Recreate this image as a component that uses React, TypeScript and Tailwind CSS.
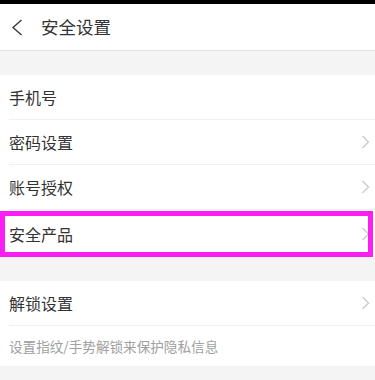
import React from 'react';

const font = { fontFamily: '"Noto Sans CJK SC", "Noto Sans", sans-serif' };

const Chevron = () => (
    <svg width="9" height="14" viewBox="0 0 9 14" fill="none" className="mr-[5px]">
        <path d="M1.5 1L7.5 7L1.5 13" stroke="#c8c8c8" strokeWidth="1.2" />
    </svg>
);

const Row: React.FC<{ label: string; arrow?: boolean; className?: string; children?: React.ReactNode }> = ({
    label,
    arrow = true,
    className = 'h-[44px]',
    children,
}) => (
    <div className={`relative flex items-center justify-between bg-white pl-[9px] ${className}`}>
        <span className="text-[16px] text-[#333]">{label}</span>
        {arrow && <Chevron />}
        {children}
    </div>
);

const Divider = () => (
    <div className="bg-white pl-[9px]">
        <div className="h-px bg-[#f0f0f0]" />
    </div>
);

export default function App() {
    return (
        <div className="w-[375px] h-[380px] overflow-hidden bg-[#f4f4f4]" style={font}>
            <div className="h-[4px] bg-black" />

            {/* Header */}
            <div className="flex items-center h-[47px] bg-white border-b border-[#e2e2e2]">
                <svg width="12" height="17" viewBox="0 0 12 17" fill="none" className="ml-[11px]">
                    <path d="M10.5 1L2 8.5L10.5 16" stroke="#333" strokeWidth="1.3" />
                </svg>
                <span className="ml-[18px] text-[17.5px] text-[#333]">安全设置</span>
            </div>

            <div className="h-[24px]" />

            <Row label="手机号" arrow={false} />
            <Divider />
            <Row label="密码设置" />
            <Divider />
            <Row label="账号授权" />
            <Divider />
            <Row label="安全产品" className="h-[47px]">
                <div className="absolute left-0 top-[1px] w-[373px] h-[46px] border-[5px] border-[#fa1ef5]" />
            </Row>

            <div className="h-[24px]" />

            <Row label="解锁设置" />
            <Divider />
            <div className="flex items-center h-[40px] bg-white pl-[9px]">
                <span className="text-[13.6px] text-[#a0a0a0]">设置指纹/手势解锁来保护隐私信息</span>
            </div>
        </div>
    );
}
